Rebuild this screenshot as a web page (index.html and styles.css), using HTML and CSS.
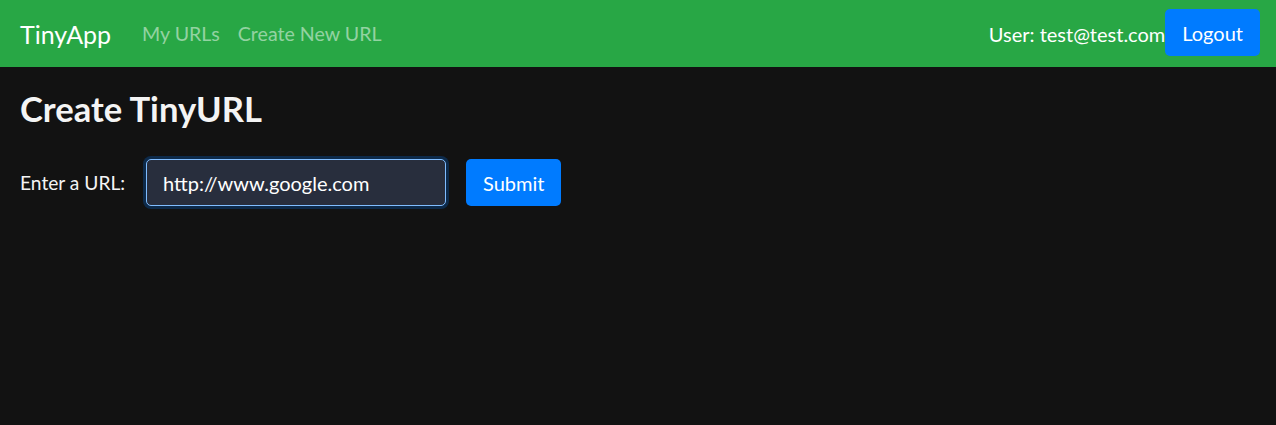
FILE: index.html
```html
<!DOCTYPE html>
<html lang="en">
<head>
<meta charset="utf-8">
<title>TinyApp</title>
<link rel="stylesheet" href="styles.css">
</head>
<body>
<nav class="navbar">
  <a class="brand" href="#">TinyApp</a>
  <div class="nav-links">
    <a class="nav-link" href="#">My URLs</a>
    <a class="nav-link" href="#">Create New URL</a>
  </div>
  <div class="nav-right">
    <span class="user">User: test@test.com</span>
    <button class="btn btn-nav">Logout</button>
  </div>
</nav>
<main class="main">
  <h2 class="title">Create TinyURL</h2>
  <form class="url-form">
    <label class="label" for="longURL">Enter a URL:</label>
    <div class="input-wrap"><input id="longURL" class="input" type="text" value="http://www.google.com"></div>
    <button class="btn" type="button">Submit</button>
  </form>
</main>
</body>
</html>
```
FILE: styles.css
```css
* { box-sizing: border-box; }
html, body { margin: 0; padding: 0; }
body {
  background: #121212;
  color: #f4f4f4;
  font-family: "Lato", "Open Sans", sans-serif;
  height: 425px;
  overflow: hidden;
}
.navbar {
  display: flex;
  align-items: center;
  height: 67px;
  background: #28a745;
  padding: 0 16px 0 20px;
}
.brand {
  color: #fff;
  font-size: 25px;
  text-decoration: none;
  margin-right: 31px;
}
.nav-links { display: flex; gap: 18px; }
.nav-link {
  color: rgba(255,255,255,0.5);
  font-size: 19.6px;
  text-decoration: none;
}
.nav-right { margin-left: auto; display: flex; align-items: center; }
.user { color: #fff; font-size: 20px; }
.btn {
  background: #007bff;
  color: #fff;
  border: none;
  border-radius: 5px;
  font-family: inherit;
  font-size: 20px;
  height: 47px;
  padding: 0 17px;
}
.btn-nav { margin-bottom: 2px; }
.main { padding: 0 20px; }
.title {
  font-size: 34.6px;
  font-weight: 700;
  margin: 22px 0 30px;
  line-height: 40px;
}
.url-form { display: flex; align-items: center; gap: 20px; }
.label { font-size: 19.2px; min-width: 106px; }
.input-wrap { display: flex; }
.input {
  width: 300px;
  height: 47px;
  background: #282e3d;
  color: #fff;
  border: 1px solid #80bdff;
  border-radius: 5px;
  box-shadow: 0 0 0 3px #0d2a4a;
  font-family: inherit;
  font-size: 20px;
  padding: 0 16px;
  outline: none;
}
```
